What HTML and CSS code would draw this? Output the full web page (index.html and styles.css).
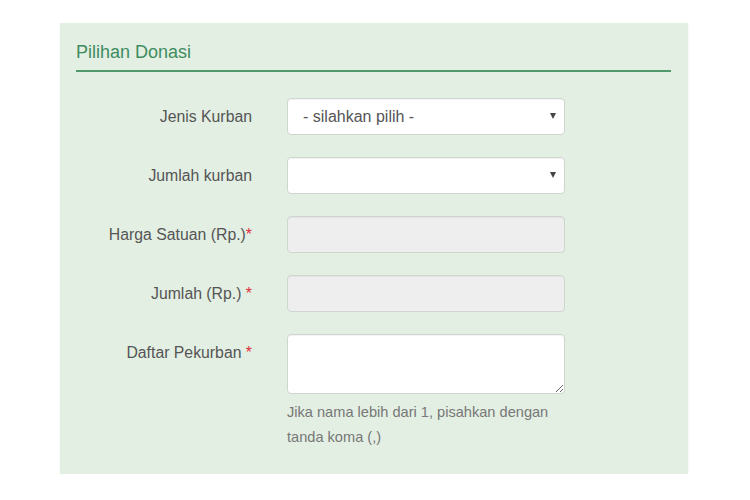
FILE: index.html
```html
<!DOCTYPE html>
<html lang="id">
<head>
<meta charset="utf-8">
<title>Pilihan Donasi</title>
<link rel="stylesheet" href="styles.css">
</head>
<body>
<section class="panel">
  <h2 class="panel-title">Pilihan Donasi</h2>
  <form class="form">
    <div class="row">
      <label class="label">Jenis Kurban</label>
      <div class="field select-wrap">
        <select class="control select"><option>- silahkan pilih -</option></select>
        <span class="caret"></span>
      </div>
    </div>
    <div class="row">
      <label class="label">Jumlah kurban</label>
      <div class="field select-wrap">
        <select class="control select"><option></option></select>
        <span class="caret"></span>
      </div>
    </div>
    <div class="row">
      <label class="label">Harga Satuan (Rp.)<span class="req">*</span></label>
      <div class="field"><input class="control readonly" type="text" readonly></div>
    </div>
    <div class="row">
      <label class="label">Jumlah (Rp.) <span class="req">*</span></label>
      <div class="field"><input class="control readonly" type="text" readonly></div>
    </div>
    <div class="row row-top">
      <label class="label label-top">Daftar Pekurban <span class="req">*</span></label>
      <div class="field">
        <textarea class="control textarea"></textarea>
        <p class="help">Jika nama lebih dari 1, pisahkan dengan tanda koma (,)</p>
      </div>
    </div>
  </form>
</section>
</body>
</html>
```

FILE: styles.css
```css
* { box-sizing: border-box; }
html, body { margin: 0; padding: 0; background: #ffffff; }
body {
  font-family: "Liberation Sans", Arial, sans-serif;
  padding: 23px 0 0 60px;
}
.panel {
  width: 628px;
  height: 451px;
  background: #e3efe3;
  padding: 19px 17px 0 16px;
  box-shadow: 0 1px 3px rgba(0, 0, 0, 0.06);
}
.panel-title {
  margin: 0;
  font-weight: normal;
  font-size: 18px;
  line-height: 20px;
  color: #3e8c60;
  padding-bottom: 8px;
  border-bottom: 2px solid #4f9a6c;
}
.form {
  margin-top: 26px;
  display: flex;
  flex-direction: column;
  gap: 22px;
}
.row {
  display: grid;
  grid-template-columns: 176px 278px;
  column-gap: 35px;
  align-items: center;
}
.row-top { align-items: start; }
.label {
  text-align: right;
  font-size: 15.8px;
  color: #555;
  line-height: 20px;
  white-space: nowrap;
}
.label-top { padding-top: 9px; }
.req { color: #e0313a; }
.field { position: relative; }
.control {
  display: block;
  width: 278px;
  height: 37px;
  margin: 0;
  border: 1px solid #cfd6cf;
  border-radius: 4px;
  background: #ffffff;
  font-family: "Liberation Sans", Arial, sans-serif;
  font-size: 16px;
  color: #555;
  box-shadow: inset 0 1px 1px rgba(0, 0, 0, 0.05);
}
.select {
  -webkit-appearance: none;
  appearance: none;
  padding: 0 30px 0 15px;
}
.caret {
  position: absolute;
  right: 9px;
  top: 15px;
  width: 0;
  height: 0;
  border-left: 3.5px solid transparent;
  border-right: 3.5px solid transparent;
  border-top: 6px solid #444;
}
.readonly { background: #eeeeee; }
.textarea {
  height: 60px;
  resize: vertical;
  padding: 6px 12px;
}
.help {
  margin: 6px 0 0;
  font-size: 14.6px;
  line-height: 25px;
  color: #777;
}
```
